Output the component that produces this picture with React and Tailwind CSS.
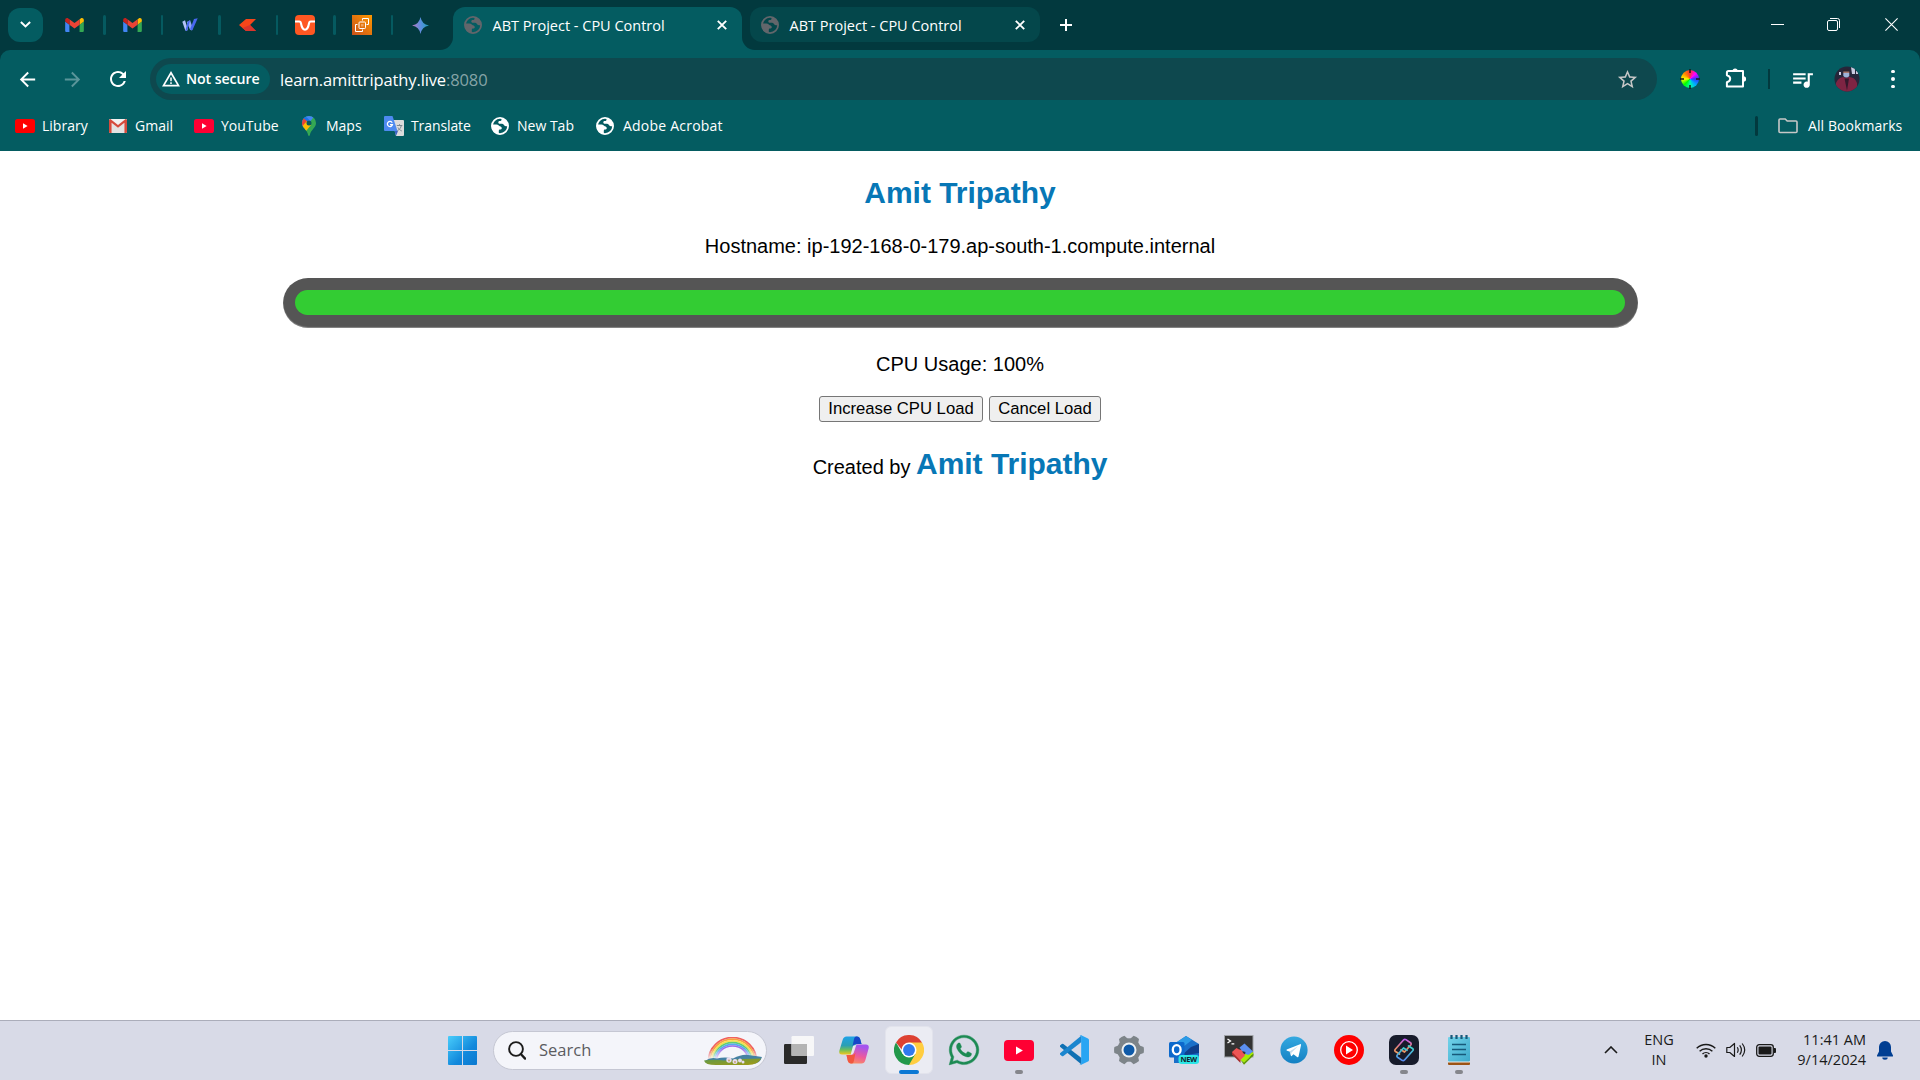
import React from "react";
import { FaWhatsapp } from "react-icons/fa";
import { MdStarOutline, MdArrowBack, MdArrowForward, MdRefresh, MdQueueMusic } from "react-icons/md";

const ui = "font-['Open_Sans',sans-serif]";

function Gmail({ className }) {
  return (
    <svg viewBox="52 42 88 66" className={className}>
      <path fill="#4285f4" d="M58 108h14V74L52 59v43c0 3.32 2.69 6 6 6" />
      <path fill="#34a853" d="M120 108h14c3.32 0 6-2.69 6-6V59l-20 15" />
      <path fill="#fbbc04" d="M120 48v26l20-15v-8c0-7.42-8.47-11.65-14.4-7.2" />
      <path fill="#ea4335" d="M72 74V48l24 18 24-18v26L96 92" />
      <path fill="#c5221f" d="M52 51v8l20 15V48l-5.6-4.2c-5.94-4.45-14.4-.22-14.4 7.2" />
    </svg>
  );
}

function OldGmail() {
  return (
    <svg viewBox="0 0 18 14" className="h-[14px] w-[18px]">
      <rect width="18" height="14" rx="1.200" fill="#f2f2f2" />
      <path d="M3 14V4l6 4.600L15 4v10z" fill="#e3e3e3" />
      <path d="M0 1.200A1.200 1.200 0 0 1 2 .4L9 6l7-5.600A1.200 1.200 0 0 1 18 1.200V13a1 1 0 0 1-1 1h-1.600V3.800L9 8.700 2.600 3.800V14H1a1 1 0 0 1-1-1z" fill="#d54b3d" />
    </svg>
  );
}

function YouTube({ className, fill }) {
  return (
    <svg viewBox="0 0 20 14" className={className}>
      <rect width="20" height="14" rx="2.600" fill={fill} />
      <path d="M8 4.300v5.400L12.600 7z" fill="#fff" />
    </svg>
  );
}

function Globe({ className }) {
  return (
    <svg viewBox="0 0 18 18" className={className}>
      <circle cx="9" cy="9" r="8.100" fill="none" stroke="currentColor" strokeWidth="1.800" />
      <path d="M1.200 7.500h4.300c1.800 0 2.300 1.200 3.300 1.700 1.200.6 2 .6 2 2 0 1-.9 1.200-1.800 1.200-1 0-1.200.6-1.200 1.500v3.300C4 17 .600 13.500.900 9z" fill="currentColor" />
      <path d="M10.500.9v1.900c0 1-.7 1.200-1.700 1.200-1.200 0-1.500.7-1.500 1.500 0 .9.800 1.300 1.800 1.300h2c1.200 0 1.500.8 2 1.500.7.900 1.500.9 2.400.9h1.700C17 4.500 14 1.500 10.500.9" fill="currentColor" />
    </svg>
  );
}

function Puzzle() {
  return (
    <svg viewBox="0 0 22 21" className="h-[21px] w-[22px]">
      <path d="M3.500 3H18v15.500H1.900v-4.200q3.300-.9 3.300-3.500t-3.300-3.500V4.500Q1.900 3 3.500 3z" fill="none" stroke="#fff" strokeWidth="2" strokeLinejoin="round" />
      <path d="M7.500 3a2.600 2.600 0 0 1 5.200 0zM18.500 8.300a2.600 2.600 0 0 1 0 5.200z" fill="#fff" />
    </svg>
  );
}

function WaveLogo() {
  return (
    <svg viewBox="0 0 16 14" className="h-[14px] w-4">
      <path d="M.3 3.800 3 2.200 5.800 11 5 13 3.300 12.600z" fill="#b3c3f8" />
      <path d="m4.800 4 3.300-1.800L10.800 10l-1 2.400-1.800-.6z" fill="#8fa6f6" />
      <path d="M8.100 2.200 5 13l-1.600-.4 2.400-9.100zM15.700.2 10.400 12.300 8 11.500 12 1z" fill="#4767ef" />
    </svg>
  );
}

function KiteLogo() {
  return (
    <svg viewBox="0 0 17 12" className="h-3 w-[17px]">
      <path d="M0 6 7 0h10l-6 6 6 6H7z" fill="#f6461a" />
      <path d="m3.500 9 7.500-3 6 6H7z" fill="#db342c" />
    </svg>
  );
}

function LoopLogo() {
  return (
    <svg viewBox="0 0 20 20" className="size-5">
      <rect width="20" height="20" rx="4" fill="#ff5722" />
      <path d="M0 6.500h4.300c1 0 1.400.500 1.600 1.500.7 4 1.500 6.700 4.100 6.700s3.400-2.700 4.100-6.700c.2-1 .6-1.500 1.600-1.500H20" fill="none" stroke="#fff" strokeWidth="2.100" />
    </svg>
  );
}

function Ec2Logo() {
  return (
    <svg viewBox="0 0 20 20" className="size-5">
      <defs>
        <linearGradient id="ec2" x1="0" y1="1" x2="1" y2="0">
          <stop offset="0" stopColor="#c8511b" />
          <stop offset="1" stopColor="#f90" />
        </linearGradient>
      </defs>
      <rect width="20" height="20" fill="url(#ec2)" />
      <g fill="none" stroke="#fff" strokeWidth="1" strokeLinejoin="round">
        <path d="M5.500 9.500h-2v7h7v-2" />
        <path d="M10.500 5.500v-2h6v6h-2" />
        <rect x="7" y="7" width="6.500" height="6.500" rx=".8" />
      </g>
      <rect x="9" y="9" width="2.500" height="2.500" fill="#fff" fillOpacity=".35" />
    </svg>
  );
}

function Spark() {
  return (
    <svg viewBox="0 0 16 16" className="size-[17px]">
      <defs>
        <linearGradient id="spark" x1="0" y1=".5" x2="1" y2=".4">
          <stop offset=".1" stopColor="#a97cc4" />
          <stop offset=".5" stopColor="#5a8fe0" />
          <stop offset="1" stopColor="#1d9fb8" />
        </linearGradient>
      </defs>
      <path d="M8 0q1.200 6.800 8 8-6.800 1.200-8 8-1.200-6.800-8-8 6.800-1.200 8-8" fill="url(#spark)" />
    </svg>
  );
}

function Cross({ className }) {
  return (
    <svg viewBox="0 0 10 10" className={className}>
      <path d="m.8.8 8.400 8.400m0-8.400L.8 9.200" stroke="#fff" strokeWidth="1.900" />
    </svg>
  );
}

function MapPin() {
  return (
    <svg viewBox="0 0 14 20" className="h-5 w-[14px]">
      <defs>
        <clipPath id="pin">
          <path d="M7 0a7 7 0 0 1 7 7c0 5-5.200 6.500-6.200 12.200-.2 1-1.400 1-1.600 0C5.200 13.500 0 12 0 7a7 7 0 0 1 7-7" />
        </clipPath>
      </defs>
      <g clipPath="url(#pin)">
        <path d="M0 0h14v20H0z" fill="#34a853" />
        <path d="M0 0h12.500L7 7 2 12H0z" fill="#4285f4" />
        <path d="M0 0h3l4 3.500L3.500 8 0 5z" fill="#1a73e8" />
        <path d="M0 4 1.500 2.200 5.500 5.500 0 11z" fill="#ea4335" />
        <path d="M0 10.500 5 5l4 4-5 6z" fill="#fbbc04" />
      </g>
      <circle cx="7" cy="7" r="2.500" fill="#08595f" />
    </svg>
  );
}

function Translate() {
  return (
    <svg viewBox="0 0 20 20" className="size-5">
      <path d="M8 4h11a1 1 0 0 1 1 1v14a1 1 0 0 1-1 1h-7z" fill="#dcdcdc" />
      <path d="M10.500 15H14l-2 5z" fill="#3a62c4" />
      <path d="M1 0h7.500l5 15H1a1 1 0 0 1-1-1V1a1 1 0 0 1 1-1" fill="#4d8af0" />
      <path d="M8.200 6.700A2.600 2.600 0 1 0 8.500 8.600H6" fill="none" stroke="#fff" strokeWidth="1.200" />
      <path d="M12.800 9.500h5.500M15.500 8.200v1.300M17.300 9.700c-.4 2-2 4-4 5.200M14 11.500c.7 1.500 2 2.600 3.800 3.500" fill="none" stroke="#7b8790" strokeWidth="1" />
    </svg>
  );
}

const pinned = [
  <Gmail className="h-[14px] w-[19px]" />,
  <Gmail className="h-[14px] w-[19px]" />,
  <WaveLogo />,
  <KiteLogo />,
  <LoopLogo />,
  <Ec2Logo />,
  <Spark />,
];

function TabTitle() {
  return (
    <>
      <Globe className="ml-px size-[18px] shrink-0 text-[#62666b]" />
      <span className="ml-[10.500px] w-[215px] whitespace-nowrap pt-[2px] text-[14.5px] leading-5 text-white">ABT Project - CPU Control</span>
    </>
  );
}

function TabStrip() {
  return (
    <div className="flex h-[50px] bg-[#02393e]">
      <div className="ml-2 mt-2 flex h-[34px] w-[35px] items-center justify-center rounded-xl bg-[#045c61]">
        <svg viewBox="0 0 10 6" className="mb-px h-[7px] w-[11px]">
          <path d="m.8.8 4.200 4L9.200.8" fill="none" stroke="#fff" strokeWidth="1.800" />
        </svg>
      </div>
      <div className="ml-[3px] flex h-[50px]">
        {pinned.map((icon, i) => (
          <div key={i} className="flex w-[57.600px] items-center">
            <div className="flex w-[57px] shrink-0 items-center justify-center">{icon}</div>
            {i < 6 && <div className="h-5 w-[2.500px] shrink-0 rounded bg-[#055a60]" />}
          </div>
        ))}
      </div>
      <div className="-ml-[9.200px] flex h-[50px] items-end">
        <svg viewBox="0 0 13 13" className="size-[13px]">
          <path d="M13 0v13H0A13 13 0 0 0 13 0" fill="#045c61" />
        </svg>
        <div className="flex h-[43px] w-[289px] items-center rounded-t-xl bg-[#045c61] pb-[7px] pl-[10px]">
          <TabTitle />
          <Cross className="ml-[10px] size-[10px]" />
        </div>
        <svg viewBox="0 0 13 13" className="size-[13px]">
          <path d="M0 0v13h13A13 13 0 0 1 0 0" fill="#045c61" />
        </svg>
      </div>
      <div className="-ml-[5px] mt-[7px] flex h-[35px] w-[290px] items-center rounded-xl bg-[#04474b] pl-[10px] pt-px">
        <TabTitle />
        <Cross className="ml-[11px] size-[10px]" />
      </div>
      <svg viewBox="0 0 12 12" className="ml-[20px] mt-[19px] size-[12px]">
        <path d="M6 0v12M0 6h12" stroke="#fff" strokeWidth="2" />
      </svg>
      <div className="ml-auto flex pt-[18px]">
        <div className="mr-[43px] mt-[6px] h-px w-[13px] bg-white" />
        <svg viewBox="0 0 13 13" className="mr-[45px] size-[13px]" fill="none" stroke="#fff">
          <rect x=".5" y="2.500" width="10" height="10" rx="1.500" />
          <path d="M3 .5h7.500a2 2 0 0 1 2 2V10" />
        </svg>
        <svg viewBox="0 0 13 13" className="mr-[22px] size-[13px]">
          <path d="m.4.400 12.200 12.200m0-12.200L.4 12.600" stroke="#fff" strokeWidth="1.100" />
        </svg>
      </div>
    </div>
  );
}

function ColorWheel() {
  return (
    <div className="relative flex size-5 items-center justify-center">
      <div className="size-[18px] rounded-full bg-[conic-gradient(#f33,#f0f,#33f,#0af,#0fa,#0f0,#ff0,#f80,#f33)]" />
      <svg viewBox="0 0 20 20" className="absolute inset-0 size-5">
        <path d="M10 0v4M10 16v4M0 10h4M16 10h4" stroke="#181818" strokeWidth="1.500" />
      </svg>
    </div>
  );
}

function Avatar() {
  return (
    <svg viewBox="0 0 26 26" className="size-[26px]">
      <defs>
        <clipPath id="av">
          <circle cx="13" cy="13" r="12.500" />
        </clipPath>
      </defs>
      <g clipPath="url(#av)">
        <path d="M0 0h26v26H0z" fill="#26263a" />
        <path d="M17 1h4v7h-3zM5 6h2v3H5zM22 5h2v3h-2z" fill="#c9cbe0" />
        <path d="M2 17q2-5 7-6l3 1 3-1q6 0 8 6v10H2z" fill="#7e2443" />
        <path d="m10.500 12.500 2.500 12 2-12z" fill="#35182c" />
        <path d="M9 4.500q3-4 6.500 0v4H9z" fill="#2b2430" />
        <path d="M9.300 5.500h6v1.500h-6z" fill="#a8786c" />
        <path d="M9.300 7h6v3q-3 3-6 0z" fill="#9db2d8" />
      </g>
    </svg>
  );
}

function Toolbar() {
  return (
    <div className="bg-[#02393e]">
      <div className="flex h-[58px] items-center rounded-t-[10px] bg-[#045c61]">
        <MdArrowBack className="ml-[16px] size-[23px] text-white" />
        <MdArrowForward className="ml-[22px] size-[23px] text-[#5b959a]" />
        <MdRefresh className="ml-[22px] size-[24px] text-white" />
        <div className="ml-[20px] flex h-[42px] w-[1507px] items-center rounded-full bg-[#0e484e] pl-[6px]">
          <div className="flex h-[30px] w-[114px] items-center rounded-full bg-[#045c61] pl-[6px]">
            <svg viewBox="0 0 18 16" className="h-4 w-[18px]">
              <path d="M9 1.800 16.500 14.600h-15z" fill="none" stroke="#fff" strokeWidth="1.700" />
              <path d="M9 6.500v3.800M9 11.300V13" stroke="#fff" strokeWidth="1.500" />
            </svg>
            <span className="ml-[6px] whitespace-nowrap text-[14.2px] font-semibold leading-5 tracking-[-0.1px] text-white">Not secure</span>
          </div>
          <span className="ml-[10px] whitespace-nowrap pt-px text-[16.500px] leading-6 tracking-[-0.120px] text-white">
            learn.amittripathy.live<span className="text-[#86a4a7]">:8080</span>
          </span>
          <MdStarOutline className="ml-auto mr-[18px] size-[23px] text-[#c7c7c7]" />
        </div>
        <div className="ml-[23px]">
          <ColorWheel />
        </div>
        <div className="ml-[25px] mt-[-2px]">
          <Puzzle />
        </div>
        <div className="ml-[21px] h-5 w-[2px] bg-[#02393e]" />
        <MdQueueMusic className="ml-[20px] size-[25px] text-white" />
        <div className="ml-[19px]">
          <Avatar />
        </div>
        <div className="ml-[31px] flex flex-col gap-[4px]">
          <div className="size-[3.500px] rounded-full bg-white" />
          <div className="size-[3.500px] rounded-full bg-white" />
          <div className="size-[3.500px] rounded-full bg-white" />
        </div>
      </div>
      <div className="flex h-[43px] items-start bg-[#045c61] text-[14px] leading-5 text-white">
        <div className="flex h-9 w-full items-center whitespace-nowrap">
          <YouTube className="ml-[15px] h-[14px] w-5" fill="#f00" />
          <span className="ml-[7px] w-[67px]">Library</span>
          <OldGmail />
          <span className="ml-2 w-[59px]">Gmail</span>
          <YouTube className="h-[14px] w-5" fill="#ff0033" />
          <span className="ml-[7px] w-[81px]">YouTube</span>
          <MapPin />
          <span className="ml-[10px] w-[58px]">Maps</span>
          <Translate />
          <span className="ml-[7px] w-[80px] tracking-[-0.1px]">Translate</span>
          <Globe className="size-[18px]" />
          <span className="ml-[8px] w-[79px]">New Tab</span>
          <Globe className="size-[18px]" />
          <span className="ml-[9px] tracking-[0.22px]">Adobe Acrobat</span>
          <div className="ml-auto h-5 w-[3px] rounded bg-[#02393e]" />
          <svg viewBox="0 0 20 16" className="-mt-px ml-[20px] h-4 w-5">
            <path d="M1 13.500V2q0-1 1-1h5.200l2 2H18q1 0 1 1v9.500q0 1-1 1H2q-1 0-1-1z" fill="none" stroke="#c7c7c7" strokeWidth="1.600" />
          </svg>
          <span className="ml-[10px] w-[112px] tracking-[0.08px]">All Bookmarks</span>
        </div>
      </div>
    </div>
  );
}

function Page() {
  return (
    <main className="flex h-[869px] flex-col items-center bg-white font-['Liberation_Sans',Arial,sans-serif] text-[20px] leading-[23px] text-black">
      <h1 className="mt-[24px] text-[30px] font-bold leading-[35px] tracking-[-0.03px] text-[#0777b6]">Amit Tripathy</h1>
      <p className="mt-[25px]">Hostname: ip-192-168-0-179.ap-south-1.compute.internal</p>
      <div className="ml-px mt-[20px] h-[50px] w-[1355px] rounded-[31px] bg-[#555] p-3 shadow-[inset_0_-1px_1px_rgba(255,255,255,0.3)]">
        <div className="h-[25px] w-[1330px] rounded-[12.5px] bg-[#33cc33]" />
      </div>
      <p className="mt-[25px]">CPU Usage: 100%</p>
      <div className="mt-[20px] flex gap-[6px] text-[16.667px] leading-[19px]">
        <button className="h-[26px] w-[164px] whitespace-nowrap rounded-[3px] border border-[#767676] bg-[#efefef] pb-px">Increase CPU Load</button>
        <button className="h-[26px] w-[112px] whitespace-nowrap rounded-[3px] border border-[#767676] bg-[#efefef] pb-px">Cancel Load</button>
      </div>
      <p className="mt-[24px] leading-[35px]">
        Created by <span className="text-[30px] font-bold tracking-[-0.03px] text-[#0777b6]">Amit Tripathy</span>
      </p>
    </main>
  );
}

function Rainbow() {
  const bands = ["#f0605f", "#f8a13f", "#f7e14c", "#5fcf72", "#55a8f0", "#9a6ce8"];
  return (
    <svg viewBox="0 0 58 28" className="h-7 w-[58px]">
      <defs>
        <linearGradient id="fade" x1="0" y1="0" x2="0" y2="1">
          <stop offset=".5" stopColor="#f4f5fa" stopOpacity="0" />
          <stop offset="1" stopColor="#f4f5fa" />
        </linearGradient>
        <linearGradient id="hill" x1="0" y1="0" x2="1" y2="1">
          <stop offset="0" stopColor="#5d9a4e" />
          <stop offset="1" stopColor="#a59a12" />
        </linearGradient>
      </defs>
      {bands.map((c, i) => (
        <path key={c} d={`M${4.500 + i * 1.600} 24a${24 - i * 1.600} ${23.500 - i * 1.700} 0 0 1 ${48 - i * 3.200} 0`} fill="none" stroke={c} strokeWidth="1.700" />
      ))}
      <path d="M0 0h58v23H0z" fill="url(#fade)" />
      <path d="M1 24q5-4 12-2.500 8-2 16 0 9-4.500 15-3.500 8 1 14 2-2 7-10 7H10q-8 0-9-3" fill="#4581a3" />
      <path d="M0 23.500q10-1.500 20 0 18-2 37-2-3 6.500-13 6.500H12Q1 28 0 23.500" fill="url(#hill)" />
      <g fill="#e6dcf0">
        <circle cx="25" cy="23" r="2.700" />
        <circle cx="31" cy="24.500" r="2.500" />
        <circle cx="36" cy="23.500" r="2" />
        <circle cx="39" cy="25" r="1.500" />
      </g>
      <circle cx="25" cy="23.500" r=".9" fill="#c79a66" />
      <circle cx="31" cy="25" r=".9" fill="#c79a66" />
    </svg>
  );
}

function TaskView() {
  return (
    <svg viewBox="0 0 30 28" className="h-7 w-[30px]">
      <rect y="8" width="23" height="20" rx="1.200" fill="#2a2a2a" />
      <rect x="7.500" width="22.500" height="20" rx="1.200" fill="#fafafa" fillOpacity=".92" />
      <path d="M7.500 8H23v12H7.500z" fill="#b4b4b4" />
    </svg>
  );
}

function Copilot() {
  return (
    <svg viewBox="0 0 30 28" className="h-7 w-[30px]">
      <defs>
        <linearGradient id="cpa" x1="0" y1="0" x2="0" y2="1">
          <stop offset="0" stopColor="#1fa2e8" />
          <stop offset=".5" stopColor="#2b9fb4" />
          <stop offset=".75" stopColor="#6fbf5a" />
          <stop offset="1" stopColor="#f2c71c" />
        </linearGradient>
        <linearGradient id="cpb" x1=".3" y1="0" x2="0" y2="1">
          <stop offset="0" stopColor="#a455ee" />
          <stop offset=".5" stopColor="#ee5a9c" />
          <stop offset="1" stopColor="#fb9a55" />
        </linearGradient>
      </defs>
      <path d="M7.500.5H18q2.500 0 3.300 3L22.500 8H19q-3 0-4 3l-2.500 7.500H3q-3.500 0-2.600-4L3.600 4Q4.500.5 7.500.5" fill="url(#cpa)" />
      <path d="M17 .5h1q2.500 0 3.300 3L22.500 8H17q-2.500 0-3.500 2.500L15 3q.5-2.500 2-2.500" fill="#1747c8" />
      <path d="M22.500 27.500H12q-2.500 0-3.300-3L7.500 19H11q3 0 4-3l2.500-7.500H27q3.500 0 2.600 4L26.400 24q-.9 3.500-3.900 3.500" fill="url(#cpb)" />
      <path d="M13 27.500h-1q-2.500 0-3.300-3L7.500 19H13q2.500 0 3.500-2.500L15 24.500q-.5 3-2 3" fill="#f1573f" />
      <path d="m14 10-2.300 8.500q1.700.5 2.600-1.500L16.500 9.500q-1.500-.5-2.500.5" fill="#e9e6f2" />
    </svg>
  );
}

function Chrome() {
  return (
    <svg viewBox="0 0 48 48" className="size-[30px]">
      <path d="M3.200 12A24 24 0 0 1 44.800 12L34 24H13z" fill="#dd4132" />
      <path d="M44.800 12A24 24 0 0 1 24 48l-2-8 12.400-10L34 18 24 12z" fill="#ffcd40" />
      <path d="M3.200 12A24 24 0 0 0 24 48l10.400-18H13.600z" fill="#22984a" />
      <circle cx="24" cy="24" r="12" fill="#fff" />
      <circle cx="24" cy="24" r="9.500" fill="#3079ee" />
    </svg>
  );
}

function VsCode() {
  return (
    <svg viewBox="0 0 30 30" className="size-[30px]">
      <path d="M1 10.500 2.800 9q.8-.5 1.600.1L22.500 23v6.500L1 11.800z" fill="#0f70b3" />
      <path d="M1 19.500 2.800 21q.8.500 1.600-.1L22.500 7V.5L1 18.200z" fill="#1b86cf" />
      <path d="M22.200.2 29 3.400q1 .5 1 1.600v20q0 1.100-1 1.600l-6.800 3.200q-1 .4-1.700-.4.900.5 1.700-.5V1.100q-.8-1-1.700-.5.700-.8 1.700-.4" fill="#28a5f3" />
    </svg>
  );
}

function Settings() {
  return (
    <svg viewBox="0 0 30 30" className="size-[30px]">
      <g fill="#7d8489">
        <circle cx="15" cy="15" r="11.800" />
        {[30, 90, 150, 210, 270, 330].map((a) => (
          <path key={a} d="m10.300 5 1.600-4.600q3.100-.7 6.200 0L19.700 5z" transform={`rotate(${a} 15 15)`} />
        ))}
      </g>
      <circle cx="15" cy="15" r="7.500" fill="#eef1f4" />
      <circle cx="15" cy="15" r="5.500" fill="#0f5aa8" />
    </svg>
  );
}

function Outlook() {
  return (
    <svg viewBox="0 0 30 28" className="h-7 w-[30px]">
      <path d="M5 8 17 0l13 8v16q0 3-3 3H5z" fill="#1a6fc9" />
      <path d="M8 6 17 0l6 4L10 14z" fill="#2c9be6" />
      <path d="M30 8v9L12 20l10-9z" fill="#0f3f8c" />
      <rect y="6" width="15.500" height="15.500" rx="1.500" fill="#0c69cc" />
      <ellipse cx="7.700" cy="13.700" rx="3.900" ry="4.600" fill="none" stroke="#fff" strokeWidth="2.300" />
      <rect x="9.500" y="19" width="20.500" height="9" rx="3" fill="#2ce5e6" />
      <text x="11.600" y="26.200" fontSize="7.400" fontWeight="700" fontFamily="Open Sans" textLength="16.500" fill="#10242c">NEW</text>
    </svg>
  );
}

function Terminal() {
  return (
    <svg viewBox="0 0 30 30" className="size-[30px]">
      <rect x=".5" y=".5" width="28.500" height="21.500" fill="#333" stroke="#a0a3a8" />
      <path d="m3.500 4 3 2-3 2M7.500 8.800h2.800" fill="none" stroke="#fff" strokeWidth="1.300" />
      <path d="m8 17 4.500-4 2.500 1.500 3 .5 1 3 3 2-5.500 5.500L8 19z" fill="#ee5555" />
      <path d="m8 17 8.500 8.500V28L8 19.500z" fill="#a82c2c" />
      <path d="m15.500 12.500 5-4 8.500 8-4.500 4.500-3.500-1 .5-3-3.500-1z" fill="#5b8ff0" />
      <path d="m16.500 25 4-4 .5-2 3.500 1 4-3 1 1.500L20 27.500z" fill="#a6ee00" />
      <path d="m16.500 25 3.500 2.500 9.500-9v2L20 29.800z" fill="#5f9a00" />
    </svg>
  );
}

function Telegram() {
  return (
    <svg viewBox="0 0 28 28" className="size-7">
      <defs>
        <linearGradient id="tg" x1="0" y1="0" x2="0" y2="1">
          <stop offset="0" stopColor="#35a9e0" />
          <stop offset="1" stopColor="#1380c3" />
        </linearGradient>
      </defs>
      <circle cx="14" cy="14" r="13.600" fill="url(#tg)" />
      <path d="M6 13.700 20 8.200q1.300-.4 1 1.100l-2.400 11q-.3 1.300-1.500.6l-3.600-2.700-1.800 1.800q-.7.500-.8-.6l-.7-3.600-3.200-1.100q-1.200-.5 0-1" fill="#fff" />
      <path d="m9.500 15.600 8.500-5.300-6.600 6.400-.4 3z" fill="#c6dcec" />
    </svg>
  );
}

function YtMusic() {
  return (
    <svg viewBox="0 0 30 30" className="size-[30px]">
      <circle cx="15" cy="15" r="15" fill="#f00" />
      <circle cx="15" cy="15" r="8.300" fill="none" stroke="#fff" strokeWidth="1.300" />
      <path d="M12 10.500v9l7-4.500z" fill="#fff" />
    </svg>
  );
}

function Links() {
  return (
    <svg viewBox="0 0 30 30" className="size-[30px]">
      <defs>
        <linearGradient id="lka" x1="0" y1="0" x2="0" y2="1">
          <stop offset="0" stopColor="#c05bf0" />
          <stop offset=".6" stopColor="#e88a6a" />
          <stop offset="1" stopColor="#f0a060" />
        </linearGradient>
        <linearGradient id="lkb" x1="0" y1="0" x2="0" y2="1">
          <stop offset="0" stopColor="#3fd8c8" />
          <stop offset="1" stopColor="#5a8cf0" />
        </linearGradient>
      </defs>
      <rect width="30" height="30" rx="7" fill="#171b2b" />
      <g fill="none" strokeWidth="1.700" strokeLinejoin="round" strokeLinecap="round">
        <path d="m10.500 19-4-2.500q-1.300-1-.2-2.300l8.200-9.200q1.100-1.200 2.400-.4l4.600 3.200q1.200.9.200 2.200L15.500 17l-3.500-2.300" stroke="url(#lka)" />
        <path d="m19.500 11 4 2.500q1.300 1 .2 2.300l-8.200 9.200q-1.100 1.200-2.400.4l-4.600-3.200q-1.200-.9-.2-2.200L14.500 13l3.500 2.300" stroke="url(#lkb)" />
      </g>
    </svg>
  );
}

function Notepad() {
  return (
    <svg viewBox="0 0 22 30" className="h-[30px] w-[22px]">
      <defs>
        <linearGradient id="np" x1="0" y1="0" x2="1" y2="1">
          <stop offset="0" stopColor="#73d3ea" />
          <stop offset="1" stopColor="#3da9cb" />
        </linearGradient>
      </defs>
      <path d="M0 26h22v3q0 1-1 1H1q-1 0-1-1z" fill="#9c5315" />
      <path d="M0 26h22v1.500H0z" fill="#eee" />
      <rect y="2" width="22" height="24.500" rx="1" fill="url(#np)" />
      <path d="M3.500 0v4M8.500 0v4M13.500 0v4M18.500 0v4" stroke="#17597a" strokeWidth="2.200" />
      <path d="M4 9.500h14M4 14.500h14M4 19.500h14" stroke="#17597a" strokeWidth="1.700" />
    </svg>
  );
}

const apps = [
  { icon: <TaskView /> },
  { icon: <Copilot /> },
  { icon: <Chrome />, active: true },
  { icon: <FaWhatsapp className="ml-px size-[34px] stroke-[#1c8a53] stroke-[6] text-[#1c8a53]" /> },
  { icon: <YouTube className="h-[21px] w-[30px]" fill="#ff0033" />, open: true },
  { icon: <VsCode /> },
  { icon: <Settings /> },
  { icon: <Outlook /> },
  { icon: <Terminal /> },
  { icon: <Telegram /> },
  { icon: <YtMusic /> },
  { icon: <Links />, open: true },
  { icon: <Notepad />, open: true },
];

function Taskbar() {
  return (
    <footer className="flex h-[60px] items-center border-t border-[#abadba] bg-[#d8dae7] pb-px">
      <svg viewBox="0 0 29 29" className="ml-[448px] size-[29px]">
        <defs>
          <linearGradient id="win" x1="0" y1="0" x2="1" y2="1">
            <stop offset="0" stopColor="#49cdfb" />
            <stop offset=".6" stopColor="#1289dc" />
            <stop offset="1" stopColor="#0a78d0" />
          </linearGradient>
        </defs>
        <path d="M1 0h13v14H0V1q0-1 1-1M15 0h13q1 0 1 1v13H15zM0 15h14v14H1q-1 0-1-1zM15 15h14v13q0 1-1 1H15z" fill="url(#win)" />
      </svg>
      <div className="ml-[16px] flex h-[39px] w-[274px] items-center rounded-full border border-[#c5c7d3] bg-[#f4f5fa] pl-[14px]">
        <svg viewBox="0 0 18 19" className="h-[19px] w-[18px]">
          <circle cx="8" cy="8" r="6.900" fill="none" stroke="#1b1b1b" strokeWidth="1.900" />
          <path d="m12.800 13 4.300 4.600" stroke="#1b1b1b" strokeWidth="2.300" strokeLinecap="round" />
        </svg>
        <span className="ml-[13px] mt-px text-[16.500px] text-[#5b5c61]">Search</span>
        <div className="ml-auto mr-1 mt-px">
          <Rainbow />
        </div>
      </div>
      <div className="ml-[4px] flex">
        {apps.map((a, i) => (
          <div key={i} className="relative flex h-12 w-[55px] items-center justify-center">
            {a.active && <div className="absolute inset-x-[3.500px] inset-y-0 rounded-md border border-[#e2e3ec] bg-[#ebecf3]" />}
            <div className="relative flex items-center">{a.icon}</div>
            {a.active && <div className="absolute bottom-0 h-1 w-5 rounded-full bg-[#0b78d4]" />}
            {a.open && <div className="absolute bottom-0 h-1 w-2 rounded-full bg-[#85868c]" />}
          </div>
        ))}
      </div>
      <div className="ml-auto flex items-center text-[14.500px] leading-5 text-[#1a1a1a]">
        <svg viewBox="0 0 14 8" className="mr-[26px] h-2 w-[14px]">
          <path d="m1 7 6-6 6 6" fill="none" stroke="#1a1a1a" strokeWidth="1.600" />
        </svg>
        <div className="w-[30px] text-center">
          <div>ENG</div>
          <div>IN</div>
        </div>
        <svg viewBox="0 0 20 15" className="ml-[22px] h-[15px] w-5" fill="none" stroke="#1a1a1a" strokeWidth="1.400">
          <path d="M.7 5.300a13.300 13.300 0 0 1 18.600 0M3.600 8.300a9.200 9.200 0 0 1 12.800 0M6.500 11.100a5 5 0 0 1 7 0" />
          <circle cx="10" cy="13" r="1.700" fill="#1a1a1a" stroke="none" />
        </svg>
        <svg viewBox="0 0 20 16" className="ml-[10px] h-4 w-5" fill="none" stroke="#1a1a1a" strokeWidth="1.200">
          <path d="M.8 5.500h3L8.500 1.500v13L3.800 10.500h-3z" strokeLinejoin="round" />
          <path d="M11.300 5.300q1.700 2.700 0 5.400M13.700 3.300q3.400 4.700 0 9.400M16.200 1.500q5 6.500 0 13" />
        </svg>
        <svg viewBox="0 0 20 13" className="ml-[10px] h-[13px] w-5">
          <rect x=".7" y=".7" width="16.600" height="11.600" rx="2.500" fill="none" stroke="#1a1a1a" strokeWidth="1.300" />
          <rect x="2.500" y="2.500" width="13" height="8" rx="1" fill="#1a1a1a" />
          <path d="M18 4h1q1 0 1 1v3q0 1-1 1h-1z" fill="#1a1a1a" />
        </svg>
        <div className="-mt-px w-[90px] whitespace-nowrap text-right">
          <div>11:41 AM</div>
          <div>9/14/2024</div>
        </div>
        <svg viewBox="0 0 16 19" className="ml-[11px] mr-[27px] h-[19px] w-4" fill="#003e92">
          <path d="M8 0a6 6 0 0 1 6 6v4.500l2 4q.3 1-.7 1H.7q-1 0-.7-1l2-4V6a6 6 0 0 1 6-6M5.300 16.500h5.400a2.700 2.200 0 0 1-5.400 0" />
        </svg>
      </div>
    </footer>
  );
}

export default function App() {
  return (
    <div className={`${ui} h-[1080px] w-[1920px] overflow-hidden`}>
      <TabStrip />
      <Toolbar />
      <Page />
      <Taskbar />
    </div>
  );
}
